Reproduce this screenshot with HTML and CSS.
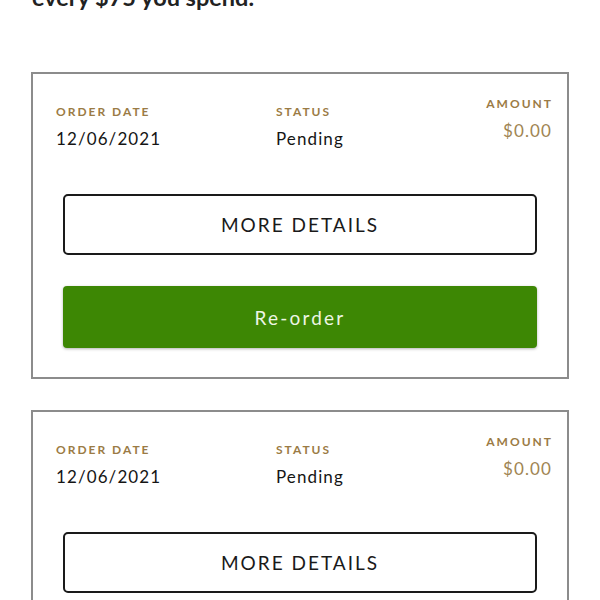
FILE: index.html
```html
<!DOCTYPE html>
<html>
<head>
<meta charset="utf-8">
<link rel="stylesheet" href="styles.css">
</head>
<body>
<div class="page">
  <h2 class="promo">every $75 you spend.</h2>
  <div class="orders">
    <div class="card">
      <div class="info">
        <div class="col">
          <div class="label">ORDER DATE</div>
          <div class="value">12/06/2021</div>
        </div>
        <div class="col">
          <div class="label">STATUS</div>
          <div class="value">Pending</div>
        </div>
        <div class="col amount">
          <div class="label">AMOUNT</div>
          <div class="value gold">$0.00</div>
        </div>
      </div>
      <button class="btn outline">MORE DETAILS</button>
      <button class="btn green">Re-order</button>
    </div>
    <div class="card">
      <div class="info">
        <div class="col">
          <div class="label">ORDER DATE</div>
          <div class="value">12/06/2021</div>
        </div>
        <div class="col">
          <div class="label">STATUS</div>
          <div class="value">Pending</div>
        </div>
        <div class="col amount">
          <div class="label">AMOUNT</div>
          <div class="value gold">$0.00</div>
        </div>
      </div>
      <button class="btn outline">MORE DETAILS</button>
      <button class="btn green">Re-order</button>
    </div>
  </div>
</div>
</body>
</html>
```
FILE: styles.css
```css
html, body {
  margin: 0;
  padding: 0;
  background: #fff;
  overflow: hidden;
}
body {
  font-family: Lato, "Open Sans", sans-serif;
  color: #1a1a1a;
}
.page {
  padding: 0 31px;
}
.promo {
  margin: -17px 0 61px 1px;
  font-size: 23.5px;
  line-height: 28px;
  font-weight: 700;
  color: #222;
}
.orders {
  display: flex;
  flex-direction: column;
  gap: 31px;
}
.card {
  border: 2px solid #8c8c8c;
  display: flex;
  flex-direction: column;
  padding-bottom: 29px;
}
.info {
  display: grid;
  grid-template-columns: 220px 1fr auto;
  padding: 29.5px 16px 0 23px;
}
.amount {
  margin-top: -8px;
  text-align: right;
}
.label {
  font-size: 12px;
  line-height: 16px;
  font-weight: 700;
  letter-spacing: 2px;
  color: #9b7b45;
}
.amount .label {
  margin-right: -2px;
}
.value {
  margin-top: 7px;
  font-size: 17px;
  line-height: 24px;
  letter-spacing: 1.1px;
  color: #151515;
}
.value.gold {
  color: #a08552;
}
.amount .value {
  margin-right: -1px;
}
.btn {
  margin: 0 30px;
  font-family: Lato, "Open Sans", sans-serif;
  font-size: 19px;
  letter-spacing: 2px;
  font-weight: 400;
  cursor: pointer;
}
.outline {
  margin-top: 43.5px;
  height: 61px;
  background: #fff;
  border: 2px solid #1a1a1a;
  border-radius: 5px;
  color: #1a1a1a;
}
.green {
  margin-top: 31px;
  height: 62px;
  background: #3d8704;
  border: none;
  border-radius: 4px;
  color: #eef6e4;
  letter-spacing: 2.2px;
  box-shadow: 0 1px 3px rgba(0,0,0,0.3);
}
```
